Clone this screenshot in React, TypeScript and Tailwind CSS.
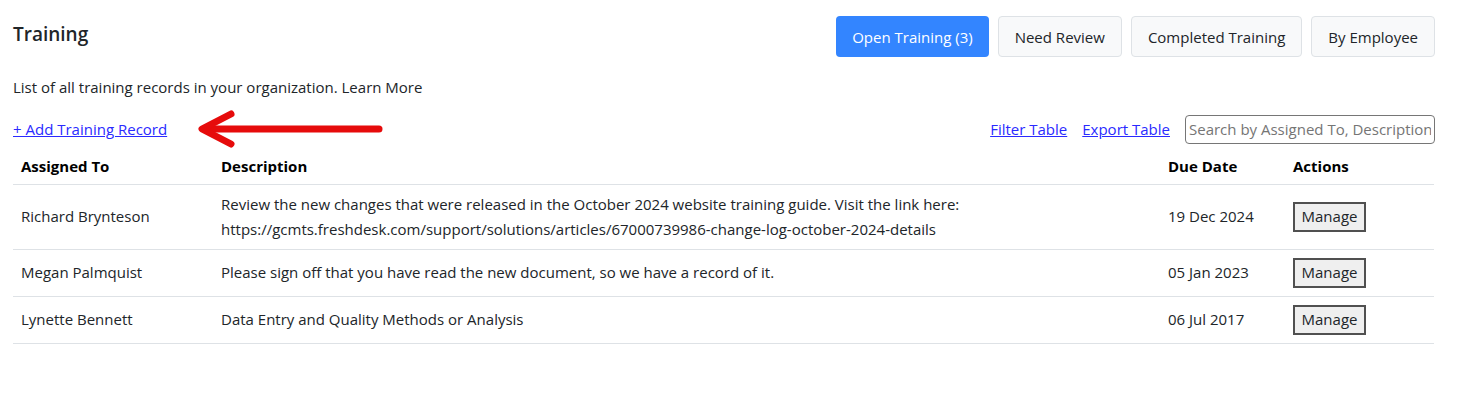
import React from "react";

const rows = [
  {
    name: "Richard Brynteson",
    desc: (
      <>
        Review the new changes that were released in the October 2024 website training guide. Visit the link here:
        <br />
        https://gcmts.freshdesk.com/support/solutions/articles/67000739986-change-log-october-2024-details
      </>
    ),
    due: "19 Dec 2024",
    tall: true,
  },
  {
    name: "Megan Palmquist",
    desc: "Please sign off that you have read the new document, so we have a record of it.",
    due: "05 Jan 2023",
  },
  {
    name: "Lynette Bennett",
    desc: "Data Entry and Quality Methods or Analysis",
    due: "06 Jul 2017",
  },
];

function Arrow() {
  return (
    <svg width="190" height="40" viewBox="0 0 190 40" className="ml-[30px]">
      <g stroke="#e60b0b" strokeWidth="7" strokeLinecap="round" strokeLinejoin="round" fill="none">
        <line x1="8" y1="20" x2="182" y2="20" />
        <polyline points="34,5 5,20 34,35" />
      </g>
    </svg>
  );
}

export default function App() {
  return (
    <div className="min-h-[405px] bg-white px-[13px] pt-4 text-[15px] text-[#212529] [font-family:'Segoe_UI','Open_Sans',sans-serif]">
      {/* Header */}
      <div className="flex items-start justify-between">
        <h1 className="mt-[6px] text-[19px] font-semibold leading-6">Training</h1>
        <div className="mr-[10px] flex gap-[9px]">
          <button className="h-[41px] rounded bg-[#3385ff] px-4 leading-[42px] text-white">Open Training (3)</button>
          <button className="h-[41px] rounded border border-[#dee2e6] bg-[#f8f9fa] px-4 leading-[40px]">Need Review</button>
          <button className="h-[41px] rounded border border-[#dee2e6] bg-[#f8f9fa] px-4 leading-[40px]">Completed Training</button>
          <button className="h-[41px] rounded border border-[#dee2e6] bg-[#f8f9fa] px-4 leading-[40px]">By Employee</button>
        </div>
      </div>

      <p className="mt-[18px] leading-6">List of all training records in your organization. Learn More</p>

      {/* Toolbar */}
      <div className="mr-[10px] mt-[10px] flex items-center justify-between">
        <div className="flex items-center">
          <a href="#" className="text-[#2a2aff] underline">+ Add Training Record</a>
          <Arrow />
        </div>
        <div className="flex items-center">
          <a href="#" className="text-[#2a2aff] underline">Filter Table</a>
          <a href="#" className="ml-[15px] text-[#2a2aff] underline">Export Table</a>
          <input
            placeholder="Search by Assigned To, Description"
            className="ml-[15px] h-[29px] w-[250px] rounded-sm border border-[#767676] px-[3px] text-[15px] placeholder:text-[#757575]"
          />
        </div>
      </div>

      {/* Table */}
      <table className="mr-[10px] w-[1421px] table-fixed border-collapse text-left">
        <colgroup>
          <col className="w-[200px]" />
          <col />
          <col className="w-[125px]" />
          <col className="w-[149px]" />
        </colgroup>
        <thead>
          <tr className="border-b border-[#dee2e6]">
            <th className="h-[35px] px-2 font-bold text-black">Assigned To</th>
            <th className="px-2 font-bold text-black">Description</th>
            <th className="px-2 font-bold text-black">Due Date</th>
            <th className="px-2 font-bold text-black">Actions</th>
          </tr>
        </thead>
        <tbody>
          {rows.map((r) => (
            <tr key={r.name} className="border-b border-[#dee2e6]">
              <td className={`px-2 ${r.tall ? "h-[65px]" : "h-[47px]"}`}>{r.name}</td>
              <td className="px-2 leading-[25px]">{r.desc}</td>
              <td className="px-2">{r.due}</td>
              <td className="px-2">
                <button className="h-[30px] w-[73px] border-2 border-[#505050] bg-[#efefef] text-[15px]">Manage</button>
              </td>
            </tr>
          ))}
        </tbody>
      </table>
    </div>
  );
}
